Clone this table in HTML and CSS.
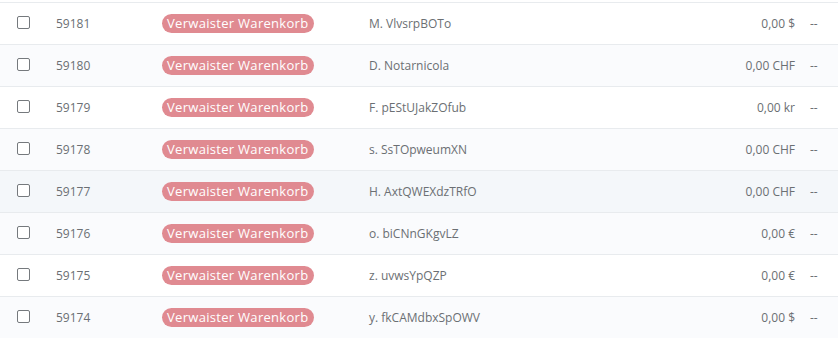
FILE: index.html
```html
<!DOCTYPE html>
<html lang="de">
<head>
<meta charset="utf-8">
<link rel="stylesheet" href="styles.css">
</head>
<body>
<div class="list">
  <div class="row">
    <span class="cb"></span><span class="id">59181</span><span><span class="badge">Verwaister Warenkorb</span></span><span class="name">M. VlvsrpBOTo</span><span class="amt">0,00 $</span><span class="dash">--</span>
  </div>
  <div class="row alt">
    <span class="cb"></span><span class="id">59180</span><span><span class="badge">Verwaister Warenkorb</span></span><span class="name">D. Notarnicola</span><span class="amt">0,00 CHF</span><span class="dash">--</span>
  </div>
  <div class="row">
    <span class="cb"></span><span class="id">59179</span><span><span class="badge">Verwaister Warenkorb</span></span><span class="name">F. pEStUJakZOfub</span><span class="amt">0,00 kr</span><span class="dash">--</span>
  </div>
  <div class="row alt">
    <span class="cb"></span><span class="id">59178</span><span><span class="badge">Verwaister Warenkorb</span></span><span class="name">s. SsTOpweumXN</span><span class="amt">0,00 CHF</span><span class="dash">--</span>
  </div>
  <div class="row hover">
    <span class="cb"></span><span class="id">59177</span><span><span class="badge">Verwaister Warenkorb</span></span><span class="name">H. AxtQWEXdzTRfO</span><span class="amt">0,00 CHF</span><span class="dash">--</span>
  </div>
  <div class="row alt">
    <span class="cb"></span><span class="id">59176</span><span><span class="badge">Verwaister Warenkorb</span></span><span class="name">o. biCNnGKgvLZ</span><span class="amt">0,00 €</span><span class="dash">--</span>
  </div>
  <div class="row">
    <span class="cb"></span><span class="id">59175</span><span><span class="badge">Verwaister Warenkorb</span></span><span class="name">z. uvwsYpQZP</span><span class="amt">0,00 €</span><span class="dash">--</span>
  </div>
  <div class="row alt">
    <span class="cb"></span><span class="id">59174</span><span><span class="badge">Verwaister Warenkorb</span></span><span class="name">y. fkCAMdbxSpOWV</span><span class="amt">0,00 $</span><span class="dash">--</span>
  </div>
</div>
</body>
</html>
```
FILE: styles.css
```css
html, body {
  margin: 0;
  padding: 0;
  background: #ffffff;
}
body {
  padding-top: 2px;
  font-family: "Open Sans", "DejaVu Sans", sans-serif;
  font-size: 12px;
  color: #6b6f73;
}
.list {
  width: 838px;
}
.row {
  display: grid;
  grid-template-columns: 39px 106px 207px 1fr auto 28px;
  align-items: center;
  height: 41px;
  padding-left: 17px;
  border-top: 1px solid #e8ebee;
  background: #ffffff;
}
.row.alt {
  background: #fafbfd;
}
.row.hover {
  background: #f4f7fa;
}
.cb {
  width: 11px;
  height: 11px;
  border: 1px solid #75797d;
  border-radius: 2px;
  background: #fff;
  margin-top: -3px;
}
.badge {
  display: inline-block;
  background: #e08a91;
  color: #ffffff;
  border-radius: 10px;
  padding: 0 5px;
  height: 19px;
  line-height: 19px;
  font-size: 13px;
  letter-spacing: 0.3px;
}
.amt {
  text-align: right;
  padding-right: 15px;
  white-space: nowrap;
}
.dash {
  white-space: nowrap;
}
```
